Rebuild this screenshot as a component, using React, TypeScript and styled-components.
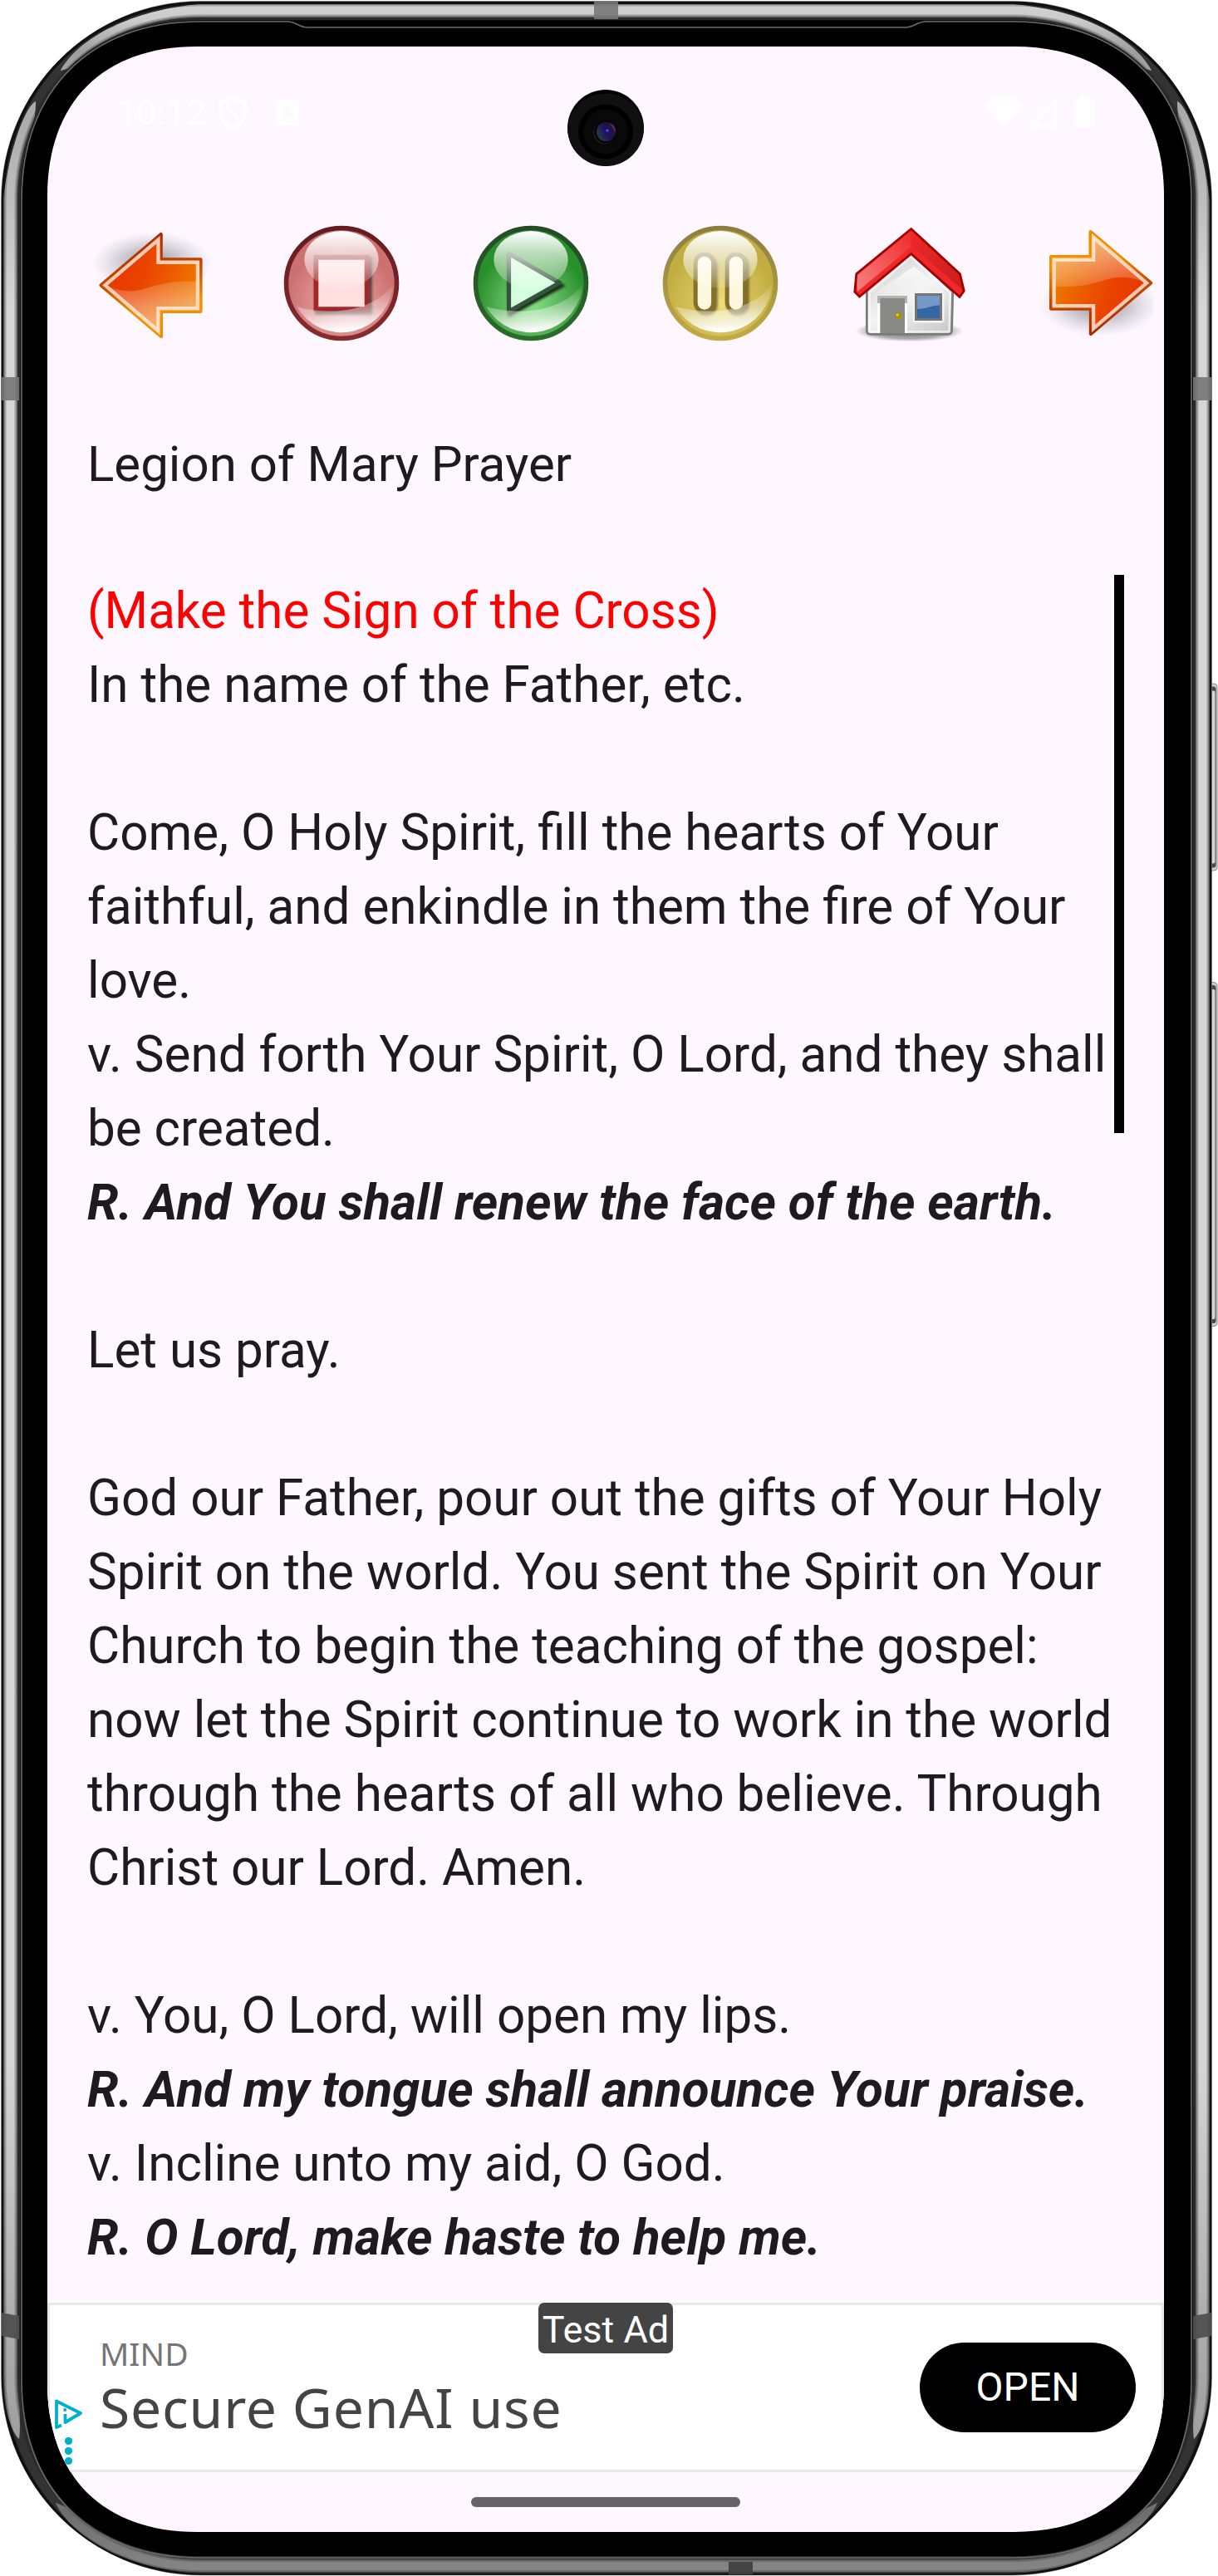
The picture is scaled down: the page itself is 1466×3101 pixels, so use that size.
import React from "react";
import styled, { createGlobalStyle } from "styled-components";

const GlobalStyle = createGlobalStyle`
  * {
    box-sizing: border-box;
  }
  body {
    margin: 0;
    background: #ffffff;
    font-family: Roboto, sans-serif;
  }
`;

// rounded outline, r is where the corner starts and c how tight it bends
const outline = (
  x0: number,
  y0: number,
  x1: number,
  y1: number,
  r: number,
  c: number
) =>
  `M${x0 + r} ${y0}H${x1 - r}C${x1 - c} ${y0} ${x1} ${y0 + c} ${x1} ${y0 + r}` +
  `V${y1 - r}C${x1} ${y1 - c} ${x1 - c} ${y1} ${x1 - r} ${y1}` +
  `H${x0 + r}C${x0 + c} ${y1} ${x0} ${y1 - c} ${x0} ${y1 - r}` +
  `V${y0 + r}C${x0} ${y0 + c} ${x0 + c} ${y0} ${x0 + r} ${y0}Z`;

const Device = styled.div`
  position: relative;
  width: 1466px;
  height: 3101px;
  padding: 56px 65px 53px 57px;
  overflow: hidden;
`;

const FrameSvg = styled.svg`
  position: absolute;
  top: 0;
  left: 0;
`;

const Screen = styled.main`
  position: relative;
  width: 1344px;
  height: 2992px;
  display: flex;
  flex-direction: column;
  background: #fef7ff;
  clip-path: path("${outline(0, 0, 1344, 2992, 180, 67)}");
`;

const StatusBar = styled.header`
  height: 196px;
  padding: 59px 84px 0 83px;
  display: flex;
  justify-content: space-between;
  align-items: flex-start;
  color: #ffffff;
`;

const StatusGroup = styled.div`
  display: flex;
  align-items: flex-start;
`;

const Clock = styled.span`
  width: 120px;
  font-size: 42px;
  line-height: 41px;
  letter-spacing: 0.8px;
`;

const Camera = styled.svg`
  position: absolute;
  top: 51px;
  left: 625px;
`;

const Toolbar = styled.nav`
  display: flex;
  gap: 84px;
  padding: 17px 0 0 54px;
  height: 262px;
`;

const IconButton = styled.button`
  flex: none;
  width: 144px;
  height: 144px;
  padding: 0;
  border: 0;
  background: none;

  svg {
    display: block;
  }
`;

const Title = styled.h1`
  margin: 0 0 88px;
  padding-left: 48px;
  font-size: 60px;
  font-weight: 400;
  line-height: 89px;
  color: #1d1b20;
`;

const Scroller = styled.section`
  flex: 1;
  display: flex;
  justify-content: space-between;
  padding: 0 48px;
  overflow: hidden;
`;

const Prayer = styled.div`
  width: 0;
  font-size: 60.18px;
  line-height: 89px;
  white-space: nowrap;
  color: #1d1b20;
`;

const Line = styled.p<{ $kind?: string }>`
  margin: 0;
  height: 89px;
  color: ${({ $kind }) => ($kind === "rubric" ? "#ff0000" : "inherit")};
  font-weight: ${({ $kind }) => ($kind === "response" ? 700 : 400)};
  font-style: ${({ $kind }) => ($kind === "response" ? "italic" : "normal")};
`;

const Thumb = styled.div`
  width: 12px;
  height: 672px;
  margin-top: 1px;
  background: #000000;
`;

const Ad = styled.aside`
  position: relative;
  height: 204px;
  padding: 45px 31px 0 60px;
  display: flex;
  justify-content: space-between;
  border: 3px solid #e6e8e9;
  background: #ffffff;
`;

const AdBadge = styled.span`
  position: absolute;
  top: -3px;
  left: 588px;
  width: 162px;
  height: 61px;
  border-radius: 7px;
  background: #444444;
  color: #ffffff;
  font-size: 45px;
  line-height: 65px;
  text-align: center;
  white-space: nowrap;
`;

const AdChoices = styled.svg`
  position: absolute;
  top: 110px;
  left: 3px;
`;

const AdCopy = styled.div`
  font-family: "Noto Sans", sans-serif;
  white-space: nowrap;
`;

const Advertiser = styled.div`
  margin-top: -9px;
  font-size: 39px;
  line-height: 44px;
  color: #757575;
`;

const Headline = styled.div`
  font-size: 66px;
  line-height: 84px;
  letter-spacing: 0.8px;
  color: #444444;
`;

const OpenButton = styled.button`
  width: 260px;
  height: 108px;
  padding: 0;
  border: 0;
  border-radius: 54px;
  background: #000000;
  color: #ffffff;
  font-family: Roboto, sans-serif;
  font-size: 48px;
  line-height: 106px;
`;

const NavBar = styled.footer`
  height: 72px;
  display: flex;
  justify-content: center;
  padding-top: 30px;
`;

const HomeHandle = styled.div`
  width: 324px;
  height: 12px;
  border-radius: 6px;
  background: #666367;
`;

const ring = (d: number) =>
  outline(1.5 + d, 1.5 + d, 1458.5 - d, 3100 - d, 240 - d, 108 - d * 1.05);

const SideKey: React.FC<{ y: number; h: number }> = ({ y, h }) => (
  <g>
    <rect x="1453" y={y + 0.5} width="12" height={h - 1} rx="4" fill="#d0d0d0" stroke="#8a8a8a" />
    <rect x="1453" y={y + 4} width="10.5" height={h - 8} rx="3" fill="#4a4a4a" />
    <rect x="1453" y={y + 9} width="9.500" height={h - 18} rx="2" fill="#d6d6d6" />
  </g>
);

const PhoneFrame: React.FC = () => (
  <FrameSvg width="1466" height="3101" viewBox="0 0 1466 3101" fill="none">
    <defs>
      <linearGradient id="metal" gradientUnits="userSpaceOnUse" x1="0" y1="0" x2="0" y2="3100">
        <stop offset="0" stopColor="#dcdcdc" />
        <stop offset="0.008" stopColor="#d2d2d2" />
        <stop offset="0.02" stopColor="#a4a4a4" />
        <stop offset="0.05" stopColor="#b4b4b4" />
        <stop offset="0.12" stopColor="#dedede" />
        <stop offset="0.8" stopColor="#dedede" />
        <stop offset="0.9" stopColor="#b4b4b4" />
        <stop offset="0.96" stopColor="#a0a0a0" />
        <stop offset="0.975" stopColor="#707070" />
        <stop offset="1" stopColor="#8c8c8c" />
      </linearGradient>
      <clipPath id="shine">
        <path d="M73 85C95 45 160 12 240 5H1220C1300 12 1365 45 1386 85L1300 60L1230 60H230L160 60Z" />
        <path d="M43 122C30 128 7 190 2 260V2860C4 2895 12 2925 23 2936C25 2920 22 2890 26 2860V240C27 210 42 165 43 122Z" />
        <path d="M1417 122C1430 128 1453 190 1458 260V2860C1456 2895 1448 2925 1437 2936C1435 2920 1438 2890 1434 2860V240C1433 210 1418 165 1417 122Z" />
        <path d="M67 3013C85 3052 150 3093 240 3098H1220C1310 3093 1375 3052 1393 3013L1300 3060L1220 3070H240L160 3050Z" />
      </clipPath>
    </defs>
    <SideKey y={757.5 + 65} h={226} />
    <SideKey y={1182} h={415} />
    <path d={ring(0)} fill="#2a2a2a" stroke="#9a9a9a" strokeWidth="0.8" />
    <path d={ring(2)} stroke="#101010" strokeWidth="3.5" />
    <path d={ring(12)} stroke="#333333" strokeWidth="10" />
    <g clipPath="url(#shine)" stroke="url(#metal)">
      <path d={ring(11)} strokeWidth="17" strokeOpacity="0.35" />
      <path d={ring(11)} strokeWidth="14" strokeOpacity="0.5" />
      <path d={ring(11)} strokeWidth="10" strokeOpacity="0.85" />
    </g>
    <path d={ring(22)} fill="#000000" stroke="#2c2c2c" strokeWidth="1.6" />
    {/* seam between the metal and the glass, it dips at the earpiece */}
    <path
      d="M26 240C26 109 109 26 240 26H346C356 26 360 33 370 33H1090C1100 33 1104 26 1114 26H1220C1351 26 1434 109 1434 240V2866C1434 2996 1351 3079 1220 3079H240C109 3079 26 2996 26 2866Z"
      stroke="#6c6c6c"
      strokeWidth="1.6"
    />
    <g fill="#777777" fillOpacity="0.9">
      <rect x="715" y="1" width="29" height="22" />
      <rect x="1.5" y="454" width="21.5" height="28" />
      <rect x="1436" y="454" width="22" height="28" />
    </g>
    <g fill="#505050" fillOpacity="0.95">
      <path d="M2 2784L23 2788V2816L2 2812Z" />
      <path d="M1458 2784L1436 2788V2816L1458 2812Z" />
      <rect x="877" y="3084" width="29" height="15" fill="#404040" />
    </g>
  </FrameSvg>
);

const CameraHole: React.FC = () => (
  <Camera width="94" height="94" viewBox="0 0 94 94">
    <defs>
      <linearGradient id="lens" x1="0" y1="0.8" x2="1" y2="0.2">
        <stop offset="0" stopColor="#2b4250" />
        <stop offset="0.5" stopColor="#1c1458" />
        <stop offset="0.8" stopColor="#2a0f38" />
        <stop offset="1" stopColor="#8a5a9a" />
      </linearGradient>
    </defs>
    <circle cx="47" cy="47" r="46" fill="#000000" />
    <ellipse cx="47" cy="49" rx="45.5" ry="43.5" fill="#101010" />
    <circle cx="47" cy="51.5" r="33" fill="#000000" />
    <circle cx="47" cy="51.5" r="27" fill="#090909" />
    <circle cx="46" cy="52.5" r="14" fill="#1c1c1c" />
    <circle cx="47.5" cy="51.5" r="14" fill="#050505" />
    <circle cx="47.5" cy="51.5" r="11.5" fill="url(#lens)" />
    <circle cx="49" cy="50.5" r="2.4" fill="#3016b0" />
    <circle cx="49" cy="50" r="1" fill="#8a70ff" />
  </Camera>
);

const LeftStatusIcons: React.FC = () => (
  <svg width="110" height="41" viewBox="0 0 110 41">
    <path
      d="M20 2.500L34.500 8V20C34.500 29 28.500 35.500 20 38.500C11.500 35.500 5.500 29 5.500 20V8Z"
      fill="none"
      stroke="#ffffff"
      strokeWidth="4"
    />
    <path
      d="M13.500 8C11.500 20 25.500 18 26.500 32"
      fill="none"
      stroke="#ffffff"
      strokeWidth="4"
    />
    <rect x="72" y="5.500" width="28" height="30.500" rx="2" fill="#ffffff" />
    <path
      d="M80 27L86 14L92 27M82.500 23H89.500"
      fill="none"
      stroke="#fef7ff"
      strokeWidth="3"
    />
    <path d="M87 32h2m2 0h2m2 0h2" stroke="#fef7ff" strokeWidth="2" />
  </svg>
);

const RightStatusIcons: React.FC = () => (
  <svg width="132" height="41" viewBox="0 0 132 41" fill="#ffffff">
    <path d="M1 11C14 -2.500 33 -2.500 46 11L23.500 38Z" />
    <path
      fillRule="evenodd"
      d="M87 1V38H50ZM82.500 12L66 28.500V34H82.500Z"
    />
    <path d="M117 0H125V4H130Q132 4 132 6V36Q132 38.500 130 38.500H111Q109 38.500 109 36V6Q109 4 111 4H117Z" />
  </svg>
);

const ArrowIcon: React.FC<{ forward?: boolean }> = ({ forward }) => {
  const id = forward ? "fwd" : "back";
  return (
    <svg width="144" height="144" viewBox="0 0 144 144">
      <defs>
        <linearGradient id={`${id}Edge`} x1="0.3" y1="0" x2="0.5" y2="1">
          <stop offset="0" stopColor="#a82400" />
          <stop offset="0.45" stopColor="#c44c00" />
          <stop offset="0.75" stopColor="#f29100" />
          <stop offset="1" stopColor="#ee8c00" />
        </linearGradient>
        <linearGradient id={`${id}Fill`} x1="0" y1="0.4" x2="1" y2="0.75">
          <stop offset="0" stopColor="#e73200" />
          <stop offset="0.4" stopColor="#ea4600" />
          <stop offset="1" stopColor="#f08200" />
        </linearGradient>
        <linearGradient id={`${id}Gloss`} x1="0.3" y1="0" x2="0.45" y2="1">
          <stop offset="0" stopColor="#ffffff" stopOpacity="0.12" />
          <stop offset="1" stopColor="#f8e0b0" stopOpacity="0.68" />
        </linearGradient>
        <radialGradient id={`${id}Shade`}>
          <stop offset="0" stopColor="#4a4a50" stopOpacity="0.6" />
          <stop offset="0.5" stopColor="#6a6a70" stopOpacity="0.33" />
          <stop offset="1" stopColor="#8a8a90" stopOpacity="0" />
        </radialGradient>
        <clipPath id={`${id}Clip`}>
          <rect x={forward ? 6.6 : 0} y="0" width="144" height="144" />
        </clipPath>
      </defs>
      <g transform={forward ? "translate(144.600 146) rotate(180)" : undefined}>
        <ellipse
          cx="72"
          cy="48"
          rx="72"
          ry="38"
          fill={`url(#${id}Shade)`}
          clipPath={`url(#${id}Clip)`}
        />
        <path
          d="M10.500 74.300L82.700 13V43.300H130.500V105.800H83V136Z"
          fill={`url(#${id}Fill)`}
          stroke={`url(#${id}Edge)`}
          strokeWidth="4.200"
          strokeLinejoin="round"
        />
        <path
          d="M18 75.500C30 80 44 84 62 79C80 74 92 69 126 70V103H80V131Z"
          fill={`url(#${id}Gloss)`}
        />
        <path
          d="M15.500 74.300L79.500 19.500V46.700H127V102.300H79.500V129.500Z"
          fill="none"
          stroke="#fff2e6"
          strokeOpacity="0.78"
          strokeWidth="4.400"
        />
      </g>
    </svg>
  );
};

interface OrbProps {
  name: string;
  rim: [string, string];
  body: [string, string, string];
  children: React.ReactNode;
}

const Orb: React.FC<OrbProps> = ({ name, rim, body, children }) => (
  <svg width="144" height="144" viewBox="0 0 144 144">
    <defs>
      <linearGradient id={`${name}Rim`} x1="0" y1="0" x2="0" y2="1">
        <stop offset="0" stopColor={rim[0]} />
        <stop offset="1" stopColor={rim[1]} />
      </linearGradient>
      <radialGradient id={`${name}Body`} cx="0.5" cy="0.68" r="0.5">
        <stop offset="0" stopColor={body[0]} />
        <stop offset="0.55" stopColor={body[1]} />
        <stop offset="1" stopColor={body[2]} />
      </radialGradient>
      <linearGradient id={`${name}Top`} x1="0" y1="0" x2="0" y2="1">
        <stop offset="0" stopColor="#ffffff" />
        <stop offset="0.5" stopColor="#ffffff" stopOpacity="0.58" />
        <stop offset="1" stopColor="#ffffff" stopOpacity="0.12" />
      </linearGradient>
      <linearGradient id={`${name}Bottom`} x1="0.35" y1="0.1" x2="0.5" y2="1">
        <stop offset="0" stopColor="#ffffff" stopOpacity="0" />
        <stop offset="0.5" stopColor="#ffffff" stopOpacity="0.4" />
        <stop offset="0.95" stopColor="#ffffff" stopOpacity="0.97" />
      </linearGradient>
      <filter id={`${name}Blur`} x="-20%" y="-20%" width="140%" height="140%">
        <feGaussianBlur stdDeviation="1.6" />
      </filter>
    </defs>
    <circle
      cx="72"
      cy="72"
      r="66.500"
      fill={`url(#${name}Body)`}
      stroke={`url(#${name}Rim)`}
      strokeWidth="5.600"
    />
    {children}
    <ellipse cx="72" cy="43.500" rx="44.700" ry="34.500" fill={`url(#${name}Top)`} />
    <path
      d="M18 100C65 113 115 103 134.500 72A62.500 62.500 0 0 1 18 100Z"
      fill={`url(#${name}Bottom)`}
    />
  </svg>
);

const StopIcon: React.FC = () => (
  <Orb name="stop" rim={["#641c1f", "#862b2e"]} body={["#f0b0b0", "#dc8c8c", "#cc7070"]}>
    <rect x="40" y="40" width="69" height="70" fill="#2a2a2a" fillOpacity="0.7" filter="url(#stopBlur)" />
    <rect x="38.500" y="37.700" width="67" height="68.300" fill="#a02828" />
    <rect x="44.300" y="43.700" width="55.400" height="56.600" fill="#ffe0e0" />
  </Orb>
);

const PlayIcon: React.FC = () => (
  <Orb name="play" rim={["#264a28", "#2a6c2a"]} body={["#86e486", "#58b458", "#28902a"]}>
    <path d="M46 39L111 75L46 111Z" fill="#183018" stroke="#183018" strokeWidth="3" filter="url(#playBlur)" />
    <path d="M45.500 36.500L106.500 71.500L45.500 106Z" fill="#d4ffdc" stroke="#34543f" strokeWidth="5.200" strokeLinejoin="round" />
  </Orb>
);

const PauseIcon: React.FC = () => (
  <Orb name="pause" rim={["#8c7e40", "#c2aa44"]} body={["#f2e07c", "#d4c058", "#c2ae40"]}>
    {[39.7, 77.7].map((x) => (
      <g key={x}>
        <rect x={x + 2} y="38" width="27" height="73" rx="13" fill="#5a4c18" fillOpacity="0.75" filter="url(#pauseBlur)" />
        <rect x={x} y="34.500" width="26.500" height="73.500" rx="13" fill="#84702a" />
        <rect x={x + 5} y="39.700" width="16.400" height="64" rx="8.200" fill="#fff8de" />
      </g>
    ))}
  </Orb>
);

const HouseIcon: React.FC = () => (
  <svg width="144" height="144" viewBox="0 0 144 144">
    <defs>
      <linearGradient id="wall" x1="0.2" y1="0" x2="0.9" y2="1">
        <stop offset="0" stopColor="#d0d0d0" />
        <stop offset="0.25" stopColor="#e2e2e2" />
        <stop offset="0.5" stopColor="#f4f4f4" />
        <stop offset="1" stopColor="#c8c8c8" />
      </linearGradient>
      <linearGradient id="gable" x1="0" y1="0" x2="0" y2="1">
        <stop offset="0" stopColor="#fafafa" />
        <stop offset="1" stopColor="#f0f0f0" stopOpacity="0" />
      </linearGradient>
      <linearGradient id="roofLeft" x1="1" y1="0" x2="0" y2="1">
        <stop offset="0" stopColor="#ef2929" />
        <stop offset="1" stopColor="#f88080" />
      </linearGradient>
      <linearGradient id="roofRight" x1="0" y1="0" x2="1" y2="1">
        <stop offset="0" stopColor="#ef2929" />
        <stop offset="1" stopColor="#c81e1e" />
      </linearGradient>
      <radialGradient id="ground">
        <stop offset="0" stopColor="#000000" stopOpacity="0.55" />
        <stop offset="0.7" stopColor="#000000" stopOpacity="0.32" />
        <stop offset="1" stopColor="#000000" stopOpacity="0" />
      </radialGradient>
    </defs>
    <ellipse cx="71.500" cy="129.500" rx="65" ry="13" fill="url(#ground)" />
    <path
      d="M73.500 36L123.700 82L122.500 129Q122.300 133.300 118 133.300H25Q20.300 133.300 20.300 129V80Z"
      fill="url(#wall)"
      stroke="#7a7c7a"
      strokeWidth="2.800"
    />
    <path
      d="M73.500 40L120.500 83L119.500 130.300H23.500V83Z"
      fill="none"
      stroke="#ffffff"
      strokeOpacity="0.6"
      strokeWidth="2.500"
    />
    <path d="M76.500 52L118 84V96H30V84Z" fill="url(#gable)" />
    <path d="M33 87H69V132H33Z" fill="#ffffff" />
    <path d="M33 87H69V96H33Z" fill="#b4b4b4" />
    <path d="M36.300 90H66V132H36.300Z" fill="#888b85" />
    <circle cx="58.300" cy="111" r="3.700" fill="#a89400" />
    <circle cx="57.300" cy="110" r="1.600" fill="#e8d820" />
    <rect x="75.500" y="81.500" width="38" height="38" rx="3" fill="#f4f4f4" />
    <rect x="79.500" y="85.500" width="30" height="30" fill="#3465a4" stroke="#757775" strokeWidth="3" />
    <path d="M81 87H108V98.500C98 98 92 103.500 81 103Z" fill="#7598c6" />
    <path
      d="M73.700 6.500L132.400 60.800L137.300 81.300L132 88.500L73.700 36.500L11.500 88L5.800 82.300L7.800 60.800Z"
      fill="#ef2929"
    />
    <path d="M73.700 6.500V28L9 82L7.800 60.800Z" fill="url(#roofLeft)" />
    <path d="M73.700 6.500L132.400 60.800L136 80L73.700 27Z" fill="url(#roofRight)" />
    <path
      d="M73.700 6.500L132.400 60.800L137.300 81.300L132 88.500L73.700 36.500L11.500 88L5.800 82.300L7.800 60.800Z"
      fill="none"
      stroke="#a40000"
      strokeWidth="2.800"
    />
  </svg>
);

const lines: { text: string; kind?: string }[] = [
  { text: "(Make the Sign of the Cross)", kind: "rubric" },
  { text: "In the name of the Father, etc." },
  { text: "" },
  { text: "Come, O Holy Spirit, fill the hearts of Your" },
  { text: "faithful, and enkindle in them the fire of Your" },
  { text: "love." },
  { text: "v. Send forth Your Spirit, O Lord, and they shall" },
  { text: "be created." },
  { text: "R. And You shall renew the face of the earth.", kind: "response" },
  { text: "" },
  { text: "Let us pray." },
  { text: "" },
  { text: "God our Father, pour out the gifts of Your Holy" },
  { text: "Spirit on the world. You sent the Spirit on Your" },
  { text: "Church to begin the teaching of the gospel:" },
  { text: "now let the Spirit continue to work in the world" },
  { text: "through the hearts of all who believe. Through" },
  { text: "Christ our Lord. Amen." },
  { text: "" },
  { text: "v. You, O Lord, will open my lips." },
  { text: "R. And my tongue shall announce Your praise.", kind: "response" },
  { text: "v. Incline unto my aid, O God." },
  { text: "R. O Lord, make haste to help me.", kind: "response" },
];

const App: React.FC = () => {
  return (
    <>
      <GlobalStyle />
      <Device>
        <PhoneFrame />
        <Screen>
          <StatusBar>
            <StatusGroup>
              <Clock>10:12</Clock>
              <LeftStatusIcons />
            </StatusGroup>
            <RightStatusIcons />
          </StatusBar>
          <CameraHole />
          <Toolbar>
            <IconButton aria-label="Previous">
              <ArrowIcon />
            </IconButton>
            <IconButton aria-label="Stop">
              <StopIcon />
            </IconButton>
            <IconButton aria-label="Play">
              <PlayIcon />
            </IconButton>
            <IconButton aria-label="Pause">
              <PauseIcon />
            </IconButton>
            <IconButton aria-label="Home">
              <HouseIcon />
            </IconButton>
            <IconButton aria-label="Next">
              <ArrowIcon forward />
            </IconButton>
          </Toolbar>
          <Title>Legion of Mary Prayer</Title>
          <Scroller>
            <Prayer>
              {lines.map((line, i) => (
                <Line key={i} $kind={line.kind}>
                  {line.text}
                </Line>
              ))}
            </Prayer>
            <Thumb />
          </Scroller>
          <Ad>
            <AdBadge>Test Ad</AdBadge>
            <AdChoices width="40" height="88" viewBox="0 0 40 88">
              <path
                d="M11 34.500L5 37V5.500L34 20L15.500 31V21"
                fill="none"
                stroke="#00aecd"
                strokeWidth="3.800"
                strokeLinejoin="round"
              />
              <circle cx="15.200" cy="16" r="2" fill="#00aecd" />
              <circle cx="19.500" cy="53.500" r="4.600" fill="#00aecd" />
              <circle cx="19.500" cy="65.500" r="4.600" fill="#00aecd" />
              <circle cx="19.500" cy="77.500" r="4.600" fill="#00aecd" />
            </AdChoices>
            <AdCopy>
              <Advertiser>MIND</Advertiser>
              <Headline>Secure GenAI use</Headline>
            </AdCopy>
            <OpenButton>OPEN</OpenButton>
          </Ad>
          <NavBar>
            <HomeHandle />
          </NavBar>
        </Screen>
      </Device>
    </>
  );
};

export default App;
